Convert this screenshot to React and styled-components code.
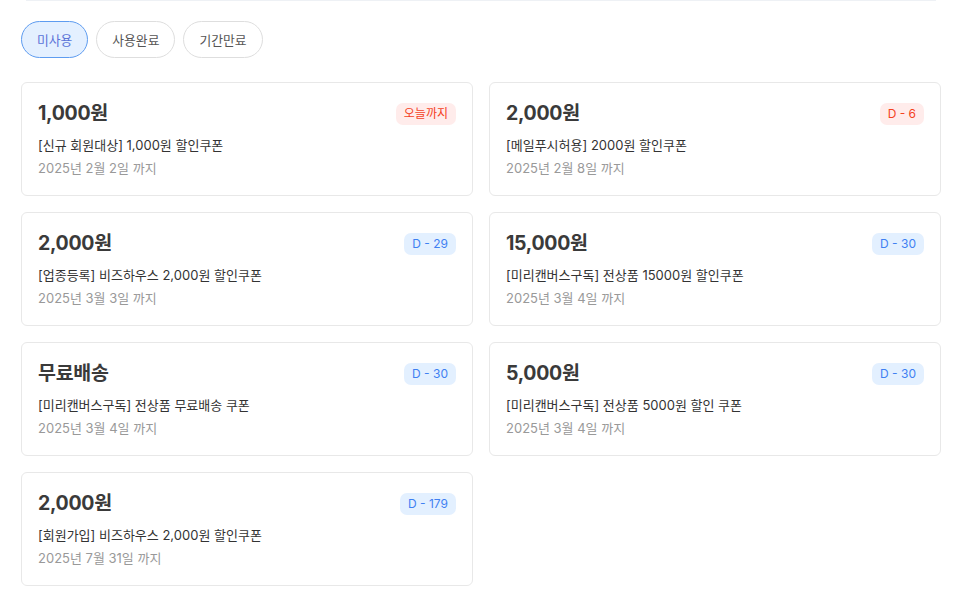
import React, { useState } from "react";
import styled, { createGlobalStyle } from "styled-components";

const coupons = [
  { title: "1,000원", desc: "[신규 회원대상] 1,000원 할인쿠폰", date: "2025년 2월 2일 까지", badge: "오늘까지", urgent: true },
  { title: "2,000원", desc: "[메일푸시허용] 2000원 할인쿠폰", date: "2025년 2월 8일 까지", badge: "D - 6", urgent: true },
  { title: "2,000원", desc: "[업종등록] 비즈하우스 2,000원 할인쿠폰", date: "2025년 3월 3일 까지", badge: "D - 29" },
  { title: "15,000원", desc: "[미리캔버스구독] 전상품 15000원 할인쿠폰", date: "2025년 3월 4일 까지", badge: "D - 30" },
  { title: "무료배송", desc: "[미리캔버스구독] 전상품 무료배송 쿠폰", date: "2025년 3월 4일 까지", badge: "D - 30" },
  { title: "5,000원", desc: "[미리캔버스구독] 전상품 5000원 할인 쿠폰", date: "2025년 3월 4일 까지", badge: "D - 30" },
  { title: "2,000원", desc: "[회원가입] 비즈하우스 2,000원 할인쿠폰", date: "2025년 7월 31일 까지", badge: "D - 179" },
];

const tabs = ["미사용", "사용완료", "기간만료"];

function App() {
  const [tab, setTab] = useState(0);

  return (
    <>
      <GlobalStyle />
      <Page>
        <TopLine />
        <Tabs>
          {tabs.map((t, i) => (
            <Tab key={t} $active={tab === i} onClick={() => setTab(i)}>
              {t}
            </Tab>
          ))}
        </Tabs>
        <Grid>
          {coupons.map((c, i) => (
            <Card key={i}>
              <CardHead>
                <Title>{c.title}</Title>
                <Badge $urgent={c.urgent}>{c.badge}</Badge>
              </CardHead>
              <Desc>{c.desc}</Desc>
              <DateText>{c.date}</DateText>
            </Card>
          ))}
        </Grid>
      </Page>
    </>
  );
}

export default App;

//styled-components
const GlobalStyle = createGlobalStyle`
    body {
        margin: 0;
        background: #fff;
        font-family: "Inter", "Noto Sans CJK KR", sans-serif;
        color: #333;
    }
`;

const Page = styled.div`
    width: 920px;
    padding: 0 12px 0 21px;
`;

const TopLine = styled.div`
    margin: 0 5px;
    height: 1px;
    background-color: #eef1f5;
`;

const Tabs = styled.div`
    display: flex;
    gap: 8px;
    margin-top: 20px;
`;

const Tab = styled.button`
    height: 37px;
    padding: 0 15px;
    border-radius: 19px;
    font-family: inherit;
    font-size: 12.8px;
    cursor: pointer;
    border: 1px solid ${props => props.$active ? "#5e9cf0" : "#dedede"};
    background-color: ${props => props.$active ? "#e4f0ff" : "#fff"};
    color: ${props => props.$active ? "#5a73d8" : "#555"};
`;

const Grid = styled.div`
    display: grid;
    grid-template-columns: 1fr 1fr;
    gap: 16px;
    margin-top: 24px;
`;

const Card = styled.div`
    height: 114px;
    box-sizing: border-box;
    border: 1px solid #e8e8e8;
    border-radius: 6px;
    padding: 18px 16px 0 16px;
`;

const CardHead = styled.div`
    display: flex;
    justify-content: space-between;
    align-items: center;
    height: 26px;
`;

const Title = styled.div`
    font-size: 19.5px;
    line-height: 22px;
    padding-bottom: 2px;
    font-weight: 700;
    color: #3a3a3a;
    letter-spacing: -0.3px;
`;

const Badge = styled.span`
    height: 22px;
    line-height: 22px;
    padding: 0 8px;
    border-radius: 7px;
    font-size: 12px;
    background-color: ${props => props.$urgent ? "#ffeceb" : "#e3f0ff"};
    color: ${props => props.$urgent ? "#f4421e" : "#3f80f2"};
`;

const Desc = styled.div`
    margin-top: 9px;
    font-size: 13px;
    color: #333;
    line-height: 18px;
`;

const DateText = styled.div`
    margin-top: 5px;
    font-size: 13px;
    color: #999;
    line-height: 18px;
`;
